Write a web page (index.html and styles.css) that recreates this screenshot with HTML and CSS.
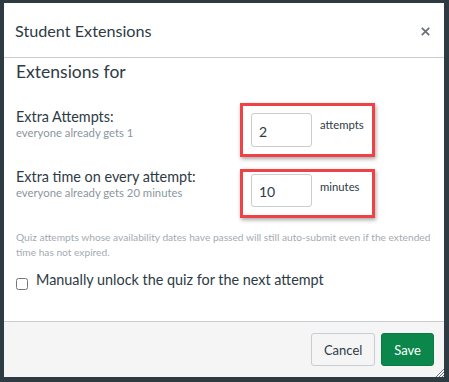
FILE: index.html
```html
<!DOCTYPE html>
<html lang="en">
<head>
    <meta charset="UTF-8">
    <meta name="viewport" content="width=device-width, initial-scale=1.0">
    <title>Student Extensions</title>
    <link rel="stylesheet" href="styles.css">
</head>
<body>

<div class="dialog">
    <div class="dialog-header">
        <h2>Student Extensions</h2>
        <button class="close" aria-label="Close">
            <svg width="9" height="9" viewBox="0 0 9 9">
                <path d="M0.8 0.8 L8.2 8.2 M8.2 0.8 L0.8 8.2" stroke="#666f76" stroke-width="1.7"/>
            </svg>
        </button>
    </div>

    <div class="dialog-body">
        <h3>Extensions for</h3>

        <div class="row">
            <div class="label">
                <div class="label-title">Extra Attempts:</div>
                <div class="label-hint">everyone already gets 1</div>
            </div>
            <div class="highlight">
                <input type="text" value="2">
                <span class="unit">attempts</span>
            </div>
        </div>

        <div class="row second-row">
            <div class="label">
                <div class="label-title">Extra time on every attempt:</div>
                <div class="label-hint">everyone already gets 20 minutes</div>
            </div>
            <div class="highlight">
                <input type="text" value="10">
                <span class="unit">minutes</span>
            </div>
        </div>

        <p class="note">Quiz attempts whose availability dates have passed will still auto-submit even if the extended time has not expired.</p>

        <label class="check">
            <input type="checkbox">
            <span>Manually unlock the quiz for the next attempt</span>
        </label>
    </div>

    <div class="dialog-footer">
        <button class="btn">Cancel</button>
        <button class="btn btn-primary">Save</button>
        <svg class="grip" width="9" height="9" viewBox="0 0 9 9">
            <path d="M1 9 L9 1 M4 9 L9 4 M7 9 L9 7" stroke="#6b7780" stroke-width="1"/>
        </svg>
    </div>
</div>

</body>
</html>
```

FILE: styles.css
```css
body {
    margin: 0;
    padding: 3px 5px 5px 4px;
    background-color: #2f3b42;
    font-family: Lato, "Open Sans", sans-serif;
    color: #2d3b45;
}
.dialog {
    width: 440px;
    height: 374px;
    background-color: white;
    display: flex;
    flex-direction: column;
    position: relative;
}
.dialog-header {
    height: 54px;
    flex-shrink: 0;
    border-bottom: 1px solid #c7cdd1;
    display: flex;
    align-items: center;
    justify-content: space-between;
    padding: 0 14px 0 11px;
}
.dialog-header h2 {
    margin: 0;
    font-size: 16.2px;
    font-weight: normal;
}
.close {
    border: none;
    background: none;
    padding: 0;
    width: 9px;
    height: 9px;
    display: flex;
    margin-top: 2px;
}
.dialog-body {
    flex: 1;
    padding: 3px 12px 0 12px;
}
.dialog-body h3 {
    margin: 0;
    font-size: 17.5px;
    line-height: 21px;
    font-weight: normal;
}
.row {
    display: flex;
    align-items: flex-start;
    margin-top: 21px;
}
.second-row {
    margin-top: 12px;
}
.label {
    width: 224px;
    padding-top: 5px;
}
.second-row .label {
    padding-top: 0;
    margin-top: -1px;
}
.label-title {
    font-size: 14.4px;
    line-height: 18px;
}
.label-hint {
    font-size: 11.3px;
    line-height: 14px;
    color: #8b969e;
}
.highlight {
    width: 118px;
    border: 3px solid #ef4146;
    box-shadow: 1px 2px 4px rgba(0, 0, 0, 0.35);
    padding: 7px 3px 7px 8px;
    display: flex;
    align-items: flex-start;
}
.second-row .highlight {
    padding: 2px 3px 8px 8px;
}
.highlight input {
    width: 61px;
    height: 34px;
    box-sizing: border-box;
    border: 1px solid #c7cdd1;
    border-radius: 3px;
    font-family: Lato, sans-serif;
    font-size: 14px;
    color: #2d3b45;
    padding: 2px 7px 0 7px;
    margin: 0;
}
.second-row .highlight input {
    height: 33px;
}
.unit {
    font-size: 11.3px;
    line-height: 14px;
    margin: 5px 0 0 8px;
}
.second-row .unit {
    margin-top: 6px;
}
.note {
    margin: 12px -8px 0 0;
    font-size: 10.2px;
    line-height: 15px;
    color: #a3abb1;
}
.check {
    display: flex;
    align-items: flex-start;
    margin-top: 11px;
    font-size: 14.4px;
    line-height: 18px;
}
.check input {
    width: 12px;
    height: 12px;
    margin: 7px 8px 0 0;
}
.dialog-footer {
    height: 55px;
    flex-shrink: 0;
    border-top: 1px solid #c7cdd1;
    background-color: #f5f5f5;
    display: flex;
    align-items: center;
    justify-content: flex-end;
    padding: 0 10px;
    gap: 6px;
}
.btn {
    height: 33px;
    padding: 0 12px;
    border: 1px solid #c7cdd1;
    border-radius: 3px;
    background-color: #f5f5f5;
    color: #2d3b45;
    font-family: Lato, sans-serif;
    font-size: 13px;
}
.btn-primary {
    background-color: #0b874b;
    border-color: #0a7a44;
    color: white;
}
.grip {
    position: absolute;
    right: 0;
    bottom: 0;
}
```
